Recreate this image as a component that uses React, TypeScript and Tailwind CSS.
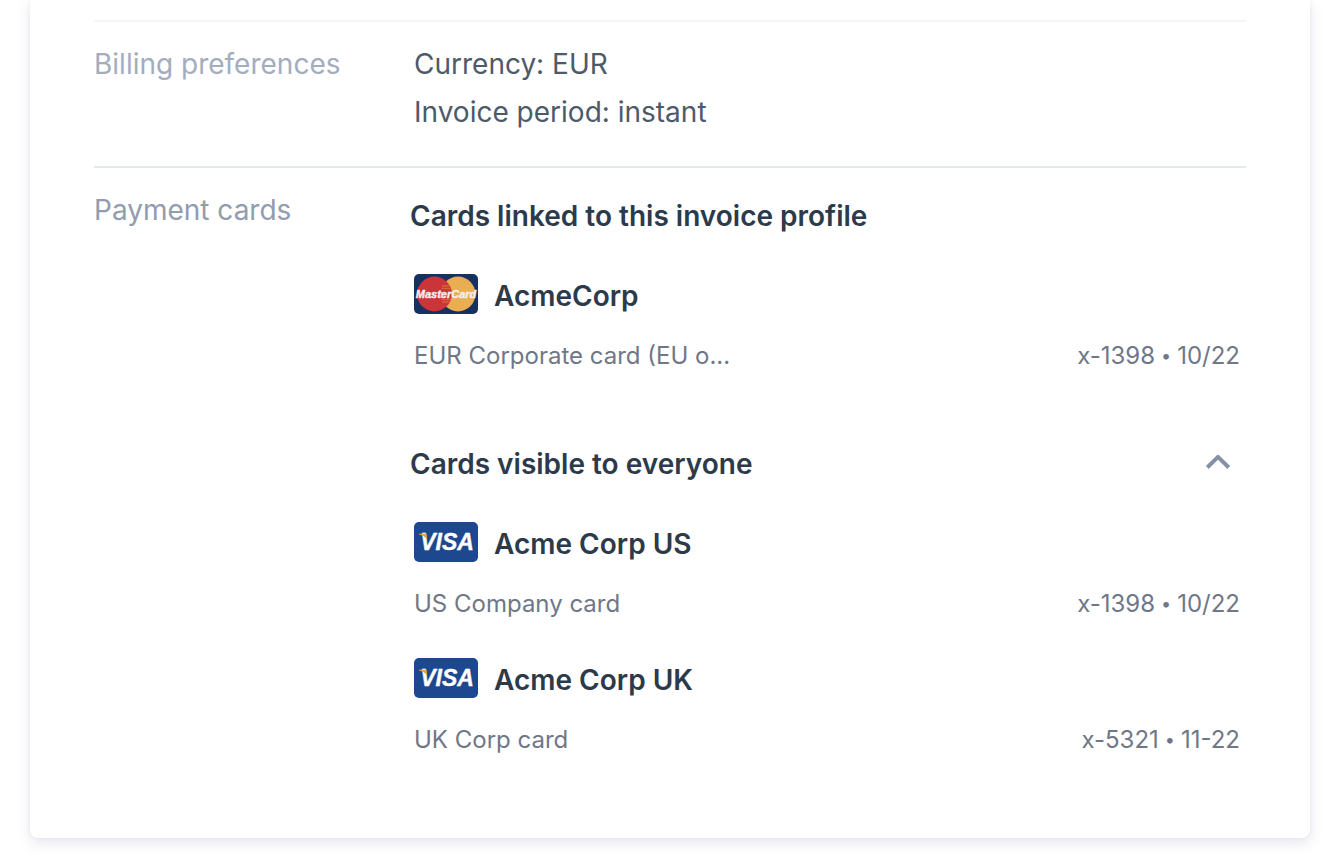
import { useState } from "react";

type Brand = "mastercard" | "visa";

interface PaymentCard {
  brand: Brand;
  name: string;
  description: string;
  digits: string;
  expiry: string;
}

const linkedCards: PaymentCard[] = [
  {
    brand: "mastercard",
    name: "AcmeCorp",
    description: "EUR Corporate card (EU o...",
    digits: "x-1398",
    expiry: "10/22",
  },
];

const sharedCards: PaymentCard[] = [
  {
    brand: "visa",
    name: "Acme Corp US",
    description: "US Company card",
    digits: "x-1398",
    expiry: "10/22",
  },
  {
    brand: "visa",
    name: "Acme Corp UK",
    description: "UK Corp card",
    digits: "x-5321",
    expiry: "11-22",
  },
];

function MastercardLogo() {
  return (
    <svg viewBox="0 0 64 40" className="h-10 w-16 shrink-0" role="img" aria-label="MasterCard">
      <rect width="64" height="40" rx="5" fill="#16305f" />
      <circle cx="44" cy="20" r="17.4" fill="#e9ae51" />
      <circle cx="20.5" cy="20" r="17.4" fill="#cb3438" />
      <path
        d="M28 12H35M27.5 14.5H36.5M27.5 25.5H37M28 28H35.5"
        stroke="#d8603c"
        strokeWidth="1.3"
      />
      <text
        x="32"
        y="24"
        textAnchor="middle"
        fontFamily="Liberation Sans Narrow, Liberation Sans, sans-serif"
        fontSize="11"
        fontWeight="700"
        fontStyle="italic"
        fill="#f6eeee"
        stroke="#f6eeee"
        strokeWidth="0.4"
      >
        MasterCard
      </text>
    </svg>
  );
}

function VisaLogo() {
  return (
    <svg viewBox="0 0 64 40" className="h-10 w-16 shrink-0" role="img" aria-label="Visa">
      <rect width="64" height="40" rx="5" fill="#1d478f" />
      <text
        x="33"
        y="28"
        textAnchor="middle"
        fontFamily="Liberation Sans, sans-serif"
        fontSize="23"
        fontWeight="700"
        fontStyle="italic"
        fill="#fff"
        stroke="#fff"
        strokeWidth="0.4"
      >
        VISA
      </text>
      <path d="M5 11.8H12.4L13.2 17.4Q10.500 13.6 5 12.5Z" fill="#e3a63b" />
    </svg>
  );
}

function CardItem({ card }: { card: PaymentCard }) {
  return (
    <li className="px-1 pt-4 pb-[22px]">
      <div className="flex h-10 items-center gap-4">
        {card.brand === "visa" ? <VisaLogo /> : <MastercardLogo />}
        <h3 className="pt-1 text-[28px] leading-10 font-semibold text-[#2c3a4b]">{card.name}</h3>
      </div>
      <div className="mt-[26px] flex justify-between gap-4 text-2xl leading-8 text-[#6f7787]">
        <p>{card.description}</p>
        <p className="flex pr-0.5">
          {card.digits}
          <span className="px-1.5 text-lg leading-8">•</span>
          {card.expiry}
        </p>
      </div>
    </li>
  );
}

export default function App() {
  const [open, setOpen] = useState(true);

  return (
    <main className="overflow-hidden bg-white px-[30px] pb-[26px] font-['Inter',sans-serif] sm:pr-[34px]">
      <section className="rounded-b-lg bg-white px-16 pb-[60px] shadow-[0_0_4px_rgba(60,70,120,0.07),0_5px_14px_rgba(60,70,120,0.13)]">
        <div className="h-5" />
        <div className="flex border-t-2 border-[#f4f5f7] pt-[18px] pb-[30px] text-[28px] leading-[48px]">
          <h2 className="w-80 shrink-0 text-[#a3adbd]">Billing preferences</h2>
          <div className="text-[#4c5a6a]">
            <p>Currency: EUR</p>
            <p>Invoice period: instant</p>
          </div>
        </div>
        <div className="flex border-t-2 border-[#e0e8f0] pt-[18px] text-[28px] leading-[48px]">
          <h2 className="w-[316px] shrink-0 text-[#919cae]">Payment cards</h2>
          <div className="min-w-0 grow pt-1.5">
            <h3 className="font-semibold text-[#2c3a4b]">Cards linked to this invoice profile</h3>
            <ul className="pt-[18px]">
              {linkedCards.map((card) => (
                <CardItem key={card.name} card={card} />
              ))}
            </ul>
            <button
              type="button"
              aria-expanded={open}
              onClick={() => setOpen(!open)}
              className="mt-[46px] flex w-full items-center justify-between pr-3.5 text-left font-semibold text-[#2c3a4b]"
            >
              Cards visible to everyone
              <svg
                viewBox="0 0 28 28"
                className={open ? "size-7 shrink-0" : "size-7 shrink-0 rotate-180"}
                fill="none"
                stroke="#8591a5"
                strokeWidth="4"
                strokeLinejoin="round"
                aria-hidden="true"
              >
                <path d="M3.3 17.5L14 6.8L24.7 17.5" />
              </svg>
            </button>
            {open && (
              <ul className="pt-[18px]">
                {sharedCards.map((card) => (
                  <CardItem key={card.name} card={card} />
                ))}
              </ul>
            )}
          </div>
        </div>
      </section>
    </main>
  );
}
